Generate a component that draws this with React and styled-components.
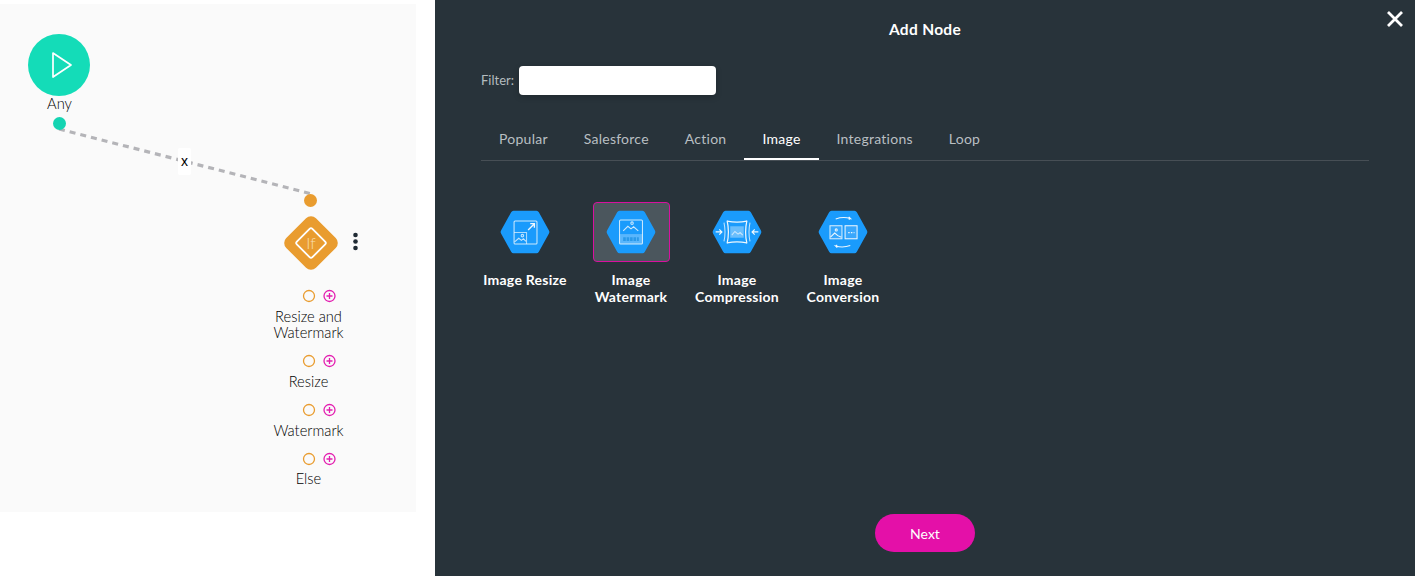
import React from "react";
import styled, { createGlobalStyle } from "styled-components";

const Global = createGlobalStyle`
  html, body { margin: 0; padding: 0; background: #fff; overflow: hidden; }
  body { font-family: Lato, "Liberation Sans", sans-serif; }
`;
const Page = styled.div`
  display: flex; width: 1415px; height: 576px; align-items: flex-start;
`;
const Canvas = styled.div`
  position: relative; flex: 0 0 416px; height: 508px; margin: 4px 19px 0 0; background: #fafafa;
`;
const Wires = styled.svg`
  position: absolute; left: 0; top: 0; width: 416px; height: 508px;
`;
const Node = styled.div`
  position: absolute; left: ${p => p.$x}px; top: ${p => p.$y}px;
`;
const StartCircle = styled.div`
  width: 62px; height: 62px; border-radius: 50%; background: #14dcb8; box-sizing: border-box;
  padding-left: 6px; display: flex; align-items: center; justify-content: center;
`;
const Label = styled.div`
  position: absolute; left: ${p => p.$x}px; top: ${p => p.$y}px; width: 110px; margin-left: -55px;
  text-align: center; font-size: 14.7px; line-height: 16px; font-weight: 300; color: #000;
`;
const Dot = styled.div`
  position: absolute; left: ${p => p.$x - p.$d / 2}px; top: ${p => p.$y - p.$d / 2}px;
  width: ${p => p.$d}px; height: ${p => p.$d}px; border-radius: 50%; background: ${p => p.$c};
`;
const EdgeLabel = styled.div`
  position: absolute; left: 178px; top: 144px; width: 13px; height: 27px; background: #fff;
  box-sizing: border-box; padding-bottom: 2px;
  display: flex; align-items: center; justify-content: center;
  font-family: "Liberation Sans", sans-serif; font-size: 14px; color: #000; border-radius: 2px;
`;
const Panel = styled.div`
  flex: 1; height: 576px; background: #28333a; position: relative; box-sizing: border-box;
  padding: 0 46px; display: flex; flex-direction: column;
`;
const Title = styled.div`
  height: 58px; line-height: 58px; text-align: center; color: #fff; font-size: 15.5px; font-weight: 700;
  letter-spacing: .3px;
`;
const Close = styled.svg`
  position: absolute; right: 11px; top: 10px; width: 18px; height: 18px;
`;
const FilterRow = styled.div`
  display: flex; align-items: center; gap: 5px; margin-top: 8px; height: 29px;
  color: #b4bcbf; font-size: 13px;
`;
const FilterText = styled.span`
  margin-top: -2px;
`;
const FilterInput = styled.input`
  width: 197px; height: 29px; box-sizing: border-box; border: 0; border-radius: 4px; background: #fff;
  box-shadow: 0 2px 6px rgba(0,0,0,.2); outline: none;
`;
const Tabs = styled.div`
  display: flex; height: 44px; margin-top: 21px; border-bottom: 1px solid #474f55; box-sizing: content-box;
`;
const Tab = styled.div`
  padding: 0 18px; height: 44px; line-height: 46px; box-sizing: border-box; font-size: 14px;
  color: ${p => (p.$active ? "#fff" : "#b9bfc2")};
  border-bottom: 2px solid ${p => (p.$active ? "#fff" : "transparent")};
  margin-bottom: -1px;
  letter-spacing: .25px;
`;
const Cards = styled.div`
  display: flex; margin-top: 41px; margin-left: -9px;
`;
const Card = styled.div`
  width: 106px; display: flex; flex-direction: column; align-items: center;
`;
const IconBox = styled.div`
  width: 77px; height: 60px; box-sizing: border-box; border-radius: 4px;
  display: flex; align-items: center; justify-content: center;
  background: ${p => (p.$selected ? "#4b565d" : "transparent")};
  border: 1px solid ${p => (p.$selected ? "#d9109f" : "transparent")};
`;
const CardLabel = styled.div`
  margin-top: 9px; color: #fff; font-size: 14px; line-height: 17px; font-weight: 700; text-align: center;
  width: 104px; letter-spacing: .25px;
`;
const Footer = styled.div`
  position: absolute; left: 440px; top: 514px;
`;
const NextButton = styled.button`
  width: 100px; height: 38px; border: 0; border-radius: 19px; background: #e410a8; color: #fff;
  font-family: Lato, sans-serif; font-size: 14px; padding: 0;
`;

const Hex = ({ children }) => (
  <svg width="50" height="46" viewBox="0 0 48 44">
    <path d="M13 1.500 H35 Q36.500 1.500 37.300 3 L47 20.500 Q47.800 22 47 23.500 L37.300 41 Q36.500 42.500 35 42.500 H13 Q11.500 42.500 10.700 41 L1 23.500 Q.2 22 1 20.500 L10.700 3 Q11.500 1.500 13 1.500 Z" fill="#1a9bfc" />
    <g fill="none" stroke="#fff" strokeWidth="1" opacity=".92">{children}</g>
  </svg>
);

const ResizeIcon = () => (
  <Hex>
    <rect x="13.500" y="11.500" width="22" height="22" rx="1" opacity=".85" />
    <path d="M13.500 22.500 H25.500 V33.500" opacity=".7" />
    <path d="M27 20 L33 14 M29 14 H33 V18" strokeWidth="1.300" />
    <circle cx="21.500" cy="25.500" r="1.200" opacity=".8" />
    <path d="M14 31.500 L18 28 L20.500 30 L22.500 28.500 L25 31" opacity=".8" />
  </Hex>
);
const WatermarkIcon = () => (
  <Hex>
    <rect x="13" y="10.500" width="22" height="23" rx="1" opacity=".85" />
    <rect x="13" y="24" width="22" height="9.500" fill="#fff" stroke="none" opacity=".3" />
    <circle cx="25" cy="13.500" r="1.200" opacity=".85" />
    <path d="M16.500 21 L21 16.500 L24 19 L26.500 17 L31 21" opacity=".85" />
    <path d="M16.500 28.800 H31.500" strokeWidth="3.500" stroke="#1a8fe0" strokeDasharray="2.500 .8" opacity=".75" />
  </Hex>
);
const CompressIcon = () => (
  <Hex>
    <path d="M14.500 11 Q17 22 14.500 33 M33.500 11 Q31 22 33.500 33" strokeWidth="1.200" />
    <path d="M11.500 13 Q13.500 22 11.500 31 M36.500 13 Q34.500 22 36.500 31" opacity=".8" />
    <path d="M14.500 11.500 Q24 13.500 33.500 11.500 M14.500 32.500 Q24 30.500 33.500 32.500" strokeWidth="1.200" />
    <rect x="17.500" y="16.500" width="13" height="11" fill="#fff" stroke="none" opacity=".38" />
    <path d="M19 25 L22 21.500 L25 24 L27 22.500 L29.500 25" opacity=".7" />
    <path d="M3.500 22 H9.500 M7 19.500 L9.500 22 L7 24.500 M44.500 22 H38.500 M41 19.500 L38.500 22 L41 24.500" strokeWidth="1.200" />
  </Hex>
);
const ConvertIcon = () => (
  <Hex>
    <rect x="11.500" y="16" width="11.500" height="12.500" opacity=".9" fill="rgba(255,255,255,.15)" />
    <circle cx="17.500" cy="20" r="1" />
    <path d="M12 27 L16 23 L19 25.500 L22.500 27" />
    <rect x="26" y="16" width="11.500" height="12.500" fill="rgba(255,255,255,.15)" />
    <path d="M29 22.500 H35" strokeDasharray="1.400 1.200" strokeWidth="1.200" />
    <path d="M17 9.500 Q24 7 31 9 L29.500 7.500 M31 9 L29.500 10" strokeWidth="1.100" />
    <path d="M31 35 Q24 37.500 17 35.500 L18.500 37 M17 35.500 L18.500 34.500" strokeWidth="1.100" />
  </Hex>
);

const tabs = ["Popular", "Salesforce", "Action", "Image", "Integrations", "Loop"];
const cards = [
  { label: ["Image Resize"], Icon: ResizeIcon },
  { label: ["Image", "Watermark"], Icon: WatermarkIcon, selected: true },
  { label: ["Image", "Compression"], Icon: CompressIcon },
  { label: ["Image", "Conversion"], Icon: ConvertIcon },
];
const ports = [
  { y: 296, label: ["Resize and", "Watermark"], ly: 309 },
  { y: 361, label: ["Resize"], ly: 374 },
  { y: 410, label: ["Watermark"], ly: 423 },
  { y: 459, label: ["Else"], ly: 471 },
];

export default function App() {
  return (
    <Page>
      <Global />
      <Canvas>
        <Wires viewBox="0 0 416 508">
          <g transform="translate(0,-4)">
            <path d="M59 129 L310 193.500" stroke="#b4b4b8" strokeWidth="3.200" strokeDasharray="6 5" fill="none" />
            {ports.map(p => (
              <g key={p.y} fill="none">
                <circle cx="309" cy={p.y} r="5.500" stroke="#e99c2f" strokeWidth="1.300" />
                <circle cx="329.500" cy={p.y} r="5.500" stroke="#e31fb0" strokeWidth="1.300" />
                <path d={`M326.500 ${p.y} H332.500 M329.500 ${p.y - 3} V${p.y + 3}`} stroke="#e31fb0" strokeWidth="1.300" />
              </g>
            ))}
          </g>
        </Wires>
        <Node $x={28} $y={30}>
          <StartCircle>
            <svg width="22" height="28" viewBox="0 0 22 28">
              <path d="M2 2 L20 14 L2 26 Z" fill="none" stroke="#fff" strokeWidth="1.700" strokeLinejoin="round" />
            </svg>
          </StartCircle>
        </Node>
        <Label $x={59.500} $y={91}>Any</Label>
        <Dot $x={59} $y={119} $d={13} $c="#14d4b2" />
        <EdgeLabel>x</EdgeLabel>
        <Dot $x={310.500} $y={196} $d={13} $c="#e99c2f" />
        <Node $x={282.500} $y={211}>
          <svg width="56" height="56" viewBox="0 0 56 56">
            <rect x="7" y="7" width="42" height="42" rx="7" transform="rotate(45 28 28)" fill="#e99c2f" />
            <rect x="17" y="17" width="22" height="22" rx="2" transform="rotate(45 28 28)" fill="none" stroke="#fff" strokeWidth="1.800" />
            <text x="28" y="33.500" textAnchor="middle" fontFamily="Lato, sans-serif" fontWeight="300" fontSize="16" fill="#f8dcb0">If</text>
          </svg>
        </Node>
        <Node $x={353} $y={228}>
          <svg width="5" height="20" viewBox="0 0 5 20">
            <circle cx="2.500" cy="3" r="2.300" fill="#1f2a33" />
            <circle cx="2.500" cy="9.500" r="2.300" fill="#1f2a33" />
            <circle cx="2.500" cy="16" r="2.300" fill="#1f2a33" />
          </svg>
        </Node>
        {ports.map(p => (
          <Label key={p.y} $x={308.500} $y={p.ly - 5}>
            {p.label.map(t => <div key={t}>{t}</div>)}
          </Label>
        ))}
      </Canvas>
      <Panel>
        <Close viewBox="0 0 18 18">
          <path d="M2 2 L16 16 M16 2 L2 16" stroke="#fff" strokeWidth="2.800" />
        </Close>
        <Title>Add Node</Title>
        <FilterRow>
          <FilterText>Filter:</FilterText>
          <FilterInput />
        </FilterRow>
        <Tabs>
          {tabs.map(t => <Tab key={t} $active={t === "Image"}>{t}</Tab>)}
        </Tabs>
        <Cards>
          {cards.map(({ label, Icon, selected }) => (
            <Card key={label.join()}>
              <IconBox $selected={selected}><Icon /></IconBox>
              <CardLabel>{label.map(t => <div key={t}>{t}</div>)}</CardLabel>
            </Card>
          ))}
        </Cards>
        <Footer><NextButton>Next</NextButton></Footer>
      </Panel>
    </Page>
  );
}
